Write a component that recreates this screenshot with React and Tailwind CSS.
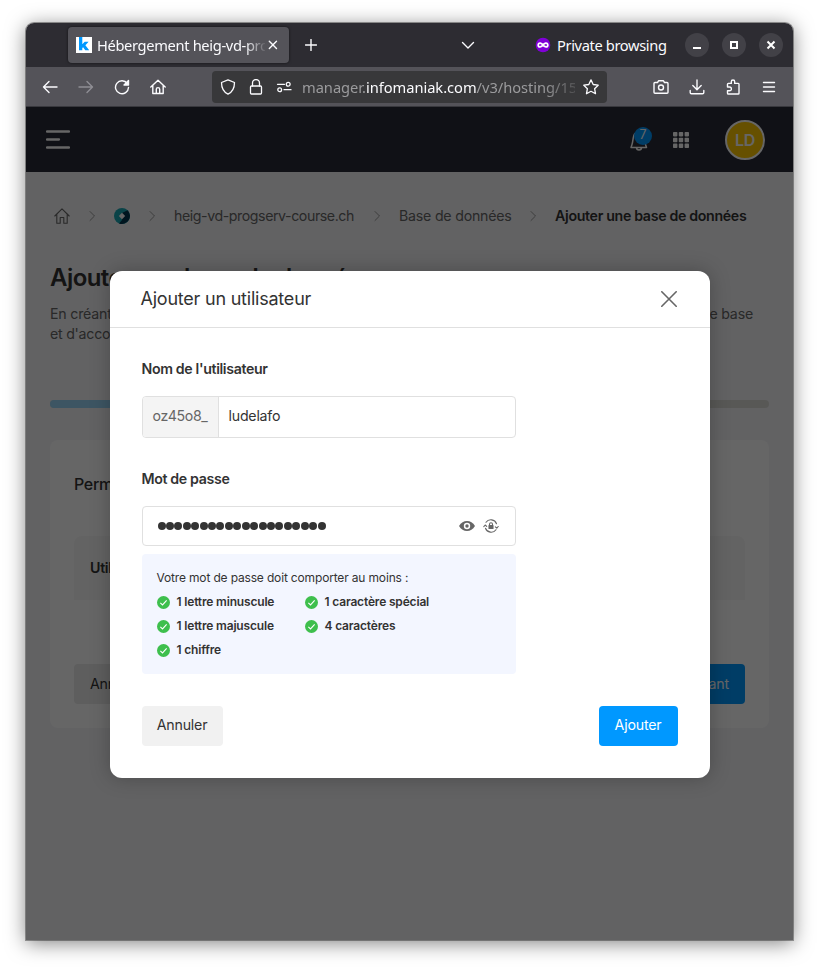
import React from "react";

function Ico({ s = 16, children, className = "", sw = 1.4, vb = "0 0 16 16" }) {
  return (
    <svg width={s} height={s} viewBox={vb} fill="none" stroke="currentColor" strokeWidth={sw} strokeLinecap="round" strokeLinejoin="round" className={"shrink-0 " + className}>
      {children}
    </svg>
  );
}

function TabBar() {
  return (
    <div className="flex h-11 items-center bg-[#2d2c32] pl-[42px] pr-[10px] text-[#fbfbfe]">
      <div className="flex h-9 w-[221px] items-center rounded bg-[#545359] pl-2 shadow-[0_0_3px_rgba(0,0,0,0.6)]">
        <div className="h-4 w-4 shrink-0 bg-white">
          <svg width="16" height="16" viewBox="0 0 16 16">
            <path d="M3 0h3.300v7.200L8.700 4.800h3.900L9.400 8.300l3.800 5H9.300L7.100 10.200l-.8.8v2.300H3z" fill="#0098ff" />
          </svg>
        </div>
        <div className="ml-[5px] w-[168px] overflow-hidden whitespace-nowrap text-[14.67px] leading-5 tracking-[-0.34px] [mask-image:linear-gradient(to_right,black_148px,transparent_170px)]">
          Hébergement heig-vd-progserv
        </div>
        <Ico s={10} vb="0 0 10 10" className="ml-[3px]"><path d="M1.300 1.300l7.200 7.200M8.500 1.300L1.300 8.500" /></Ico>
      </div>
      <Ico s={12} vb="0 0 12 12" className="ml-4"><path d="M6 .5v11M.5 6h11" /></Ico>
      <Ico s={14} vb="0 0 14 14" className="ml-[144px]"><path d="M1.500 4.500L7 10l5.500-5.500" /></Ico>
      <svg width="16" height="16" viewBox="0 0 16 16" className="ml-[60px] shrink-0">
        <circle cx="8" cy="8" r="7.300" fill="#8000d7" />
        <path d="M8 8C6.800 6.200 3.400 5 3.200 8s3.600 1.800 4.800 0c1.200-1.800 4.600-3 4.800 0S9.200 9.800 8 8z" fill="none" stroke="#fff" strokeWidth="1.800" />
      </svg>
      <div className="ml-[6px] w-[110px] whitespace-nowrap text-[14.67px] leading-5 tracking-[-0.37px]">Private browsing</div>
      <div className="ml-[18px] flex gap-[13px]">
        {["M4 11h8", "M5 5h6v6H5z", "M4.500 4.500l7 7M11.500 4.500l-7 7"].map((d) => (
          <div key={d} className="flex h-6 w-6 items-center justify-center rounded-full bg-[#424147]">
            <svg width="16" height="16" viewBox="0 0 16 16" fill="none" stroke="#fff" strokeWidth="2">
              <path d={d} />
            </svg>
          </div>
        ))}
      </div>
    </div>
  );
}

function Toolbar() {
  return (
    <div className="flex h-10 items-center border-b border-[#38383d] bg-[#545359] pl-4 pr-4 text-[#fbfbfe]">
      <Ico><path d="M15 8H1.500M7 2.500L1.500 8 7 13.500" /></Ico>
      <Ico className="ml-5 text-[#8f8e94]"><path d="M1 8h13.500M9 2.500L14.500 8 9 13.500" /></Ico>
      <Ico className="ml-5"><path d="M13.300 4.500A6.500 6.500 0 1 0 14.500 8.500" /><path d="M14.500 1.500V6H10z" fill="currentColor" /></Ico>
      <Ico className="ml-5"><path d="M.8 8L8 1.200 15.200 8M2.800 6.500v8h10.400v-8M6.300 14.500v-4.200a1.700 1.700 0 0 1 3.400 0v4.200" /></Ico>
      <div className="ml-[46px] flex h-8 w-[395px] items-center rounded bg-[#38383a] pl-2">
        <Ico sw={1.300}><path d="M8 .8l6.500 2.700c0 5.500-2 9.500-6.500 11.700C3.500 13 1.500 9 1.500 3.500z" /></Ico>
        <Ico className="ml-3" sw={1.300}><rect x="2.500" y="7" width="11" height="8" rx="1" /><path d="M4.500 7V4a3.500 3.500 0 0 1 7 0v3" /></Ico>
        <Ico className="ml-3" sw={1.300}><path d="M1.500 5.300h7M8 10.700h7" /><circle cx="12.200" cy="5.300" r="1.900" /><circle cx="3.700" cy="10.700" r="1.900" /></Ico>
        <div className="ml-[10px] w-[273px] overflow-hidden whitespace-nowrap text-[14.67px] leading-5 tracking-[-0.03px] text-[#9b9b9d] [mask-image:linear-gradient(to_right,black_240px,transparent_285px)]">
          manager.<span className="text-[#fbfbfe]">infomaniak.com</span>/v3/hosting/15
        </div>
        <Ico className="ml-[8px]" sw={1.300}><path d="M8 .9l2.200 4.600 5 .7-3.600 3.500.9 5L8 12.300l-4.500 2.400.9-5L.8 6.200l5-.7z" /></Ico>
      </div>
      <div className="ml-[46px] flex gap-5">
        <Ico><path d="M1 4.500a1 1 0 0 1 1-1h2.500l1.200-1.800h4.600l1.200 1.800H14a1 1 0 0 1 1 1v8.700a1 1 0 0 1-1 1H2a1 1 0 0 1-1-1z" /><circle cx="8" cy="8.500" r="2.500" /></Ico>
        <Ico><path d="M8 1v9.500M3.800 6.500L8 10.700l4.200-4.200M1.200 11.500v2a1.300 1.300 0 0 0 1.300 1.300h11a1.300 1.300 0 0 0 1.300-1.300v-2" /></Ico>
        <Ico><path d="M2.500 8V5.200a.8.8 0 0 1 .8-.8h3V2.700a1.700 1.700 0 0 1 3.400 0v1.700h3.500a.8.8 0 0 1 .8.8v9a.8.8 0 0 1-.8.8H3.300a.8.8 0 0 1-.8-.8v-2.400h2a1.700 1.700 0 0 0 0-3.800z" /></Ico>
        <Ico><path d="M2.500 3.500h11M2.500 8h11M2.500 12.500h11" /></Ico>
      </div>
    </div>
  );
}

function Chevron() {
  return <Ico s={12} vb="0 0 12 12" sw={1} className="mx-4 text-[#999]"><path d="M4 1.500L8.500 6 4 10.500" /></Ico>;
}

function Page() {
  return (
    <div className="h-[833px] bg-[#f5f5f8] text-[#333]">
      <div className="flex h-[65px] items-center justify-between bg-[#2a2c38] pl-5 pr-7 text-white">
        <svg width="24" height="20" viewBox="0 0 24 20" stroke="#fff" strokeWidth="2.300" strokeLinecap="round">
          <path d="M1 1.500h22M1 9.500h12M1 17.500h22" />
        </svg>
        <div className="flex items-center">
          <div className="relative h-6 w-6">
            <Ico s={24} vb="0 0 24 24" sw={1.500} className="text-white"><path d="M7 5.500C4.800 7 5.300 13 4 16.500L3 19.500h15.500l-1-3M8.500 19.500a2.500 2.500 0 0 0 5 0" /></Ico>
            <span className="absolute -top-[1px] left-[6px] flex h-[18px] w-[18px] items-center justify-center rounded-full bg-[#0098ff] text-[12.500px] text-white">7</span>
          </div>
          <svg width="16" height="16" viewBox="0 0 16 16" fill="#fff" className="ml-[21px]">
            {[0, 5.8, 11.6].map((x) => [0, 5.8, 11.6].map((y) => <rect key={x + "-" + y} x={x} y={y} width="4.400" height="4.400" rx=".8" />))}
          </svg>
          <div className="ml-9 flex h-10 w-10 items-center justify-center rounded-full border-2 border-white bg-[#ffc800] text-[16px] font-semibold tracking-[-0.3px] text-white">LD</div>
        </div>
      </div>
      <div className="flex h-[88px] items-center whitespace-nowrap pl-7 text-[14.200px] leading-5 text-[#666]">
        <Ico className="text-[#666]" sw={1.100}><path d="M.8 8L8 .8 15.200 8M2.800 6.500v8.700h3.400V9.500h3.600v5.700h3.400V6.500" /></Ico>
        <Chevron />
        <svg width="16" height="16" viewBox="0 0 16 16">
          <circle cx="8" cy="8" r="8" fill="#1ba8b4" />
          <path d="M13.500 2.200a8 8 0 0 1-8.500 13.200L8 12V5z" fill="#04364f" />
          <path d="M8 4.800L11.200 8 8 11.200 4.800 8z" fill="#fff" />
        </svg>
        <Chevron />
        <span className="w-[181px] tracking-[-0.43px]">heig-vd-progserv-course.ch</span>
        <Chevron />
        <span className="w-[112px] tracking-[-0.22px]">Base de données</span>
        <Chevron />
        <span className="font-semibold tracking-[-0.33px] text-[#333]">Ajouter une base de données</span>
      </div>
      <div className="px-6">
        <h1 className="text-[24px] font-semibold leading-9 tracking-[-0.55px]">Ajouter une base de données</h1>
        <p className="mt-2 flex justify-between text-[14.200px] leading-5 tracking-[-0.2px] text-[#666]">
          <span>En créant une base de données,</span><span className="pr-4">de base</span>
        </p>
        <p className="text-[14.200px] leading-5 tracking-[-0.25px] text-[#666]">et d'accorder</p>
        <div className="mt-14 h-2 overflow-hidden rounded-full bg-[#dcdcd8]"><div className="h-2 w-1/2 bg-[#98d5f8]" /></div>
        <div className="mt-8 flex h-72 flex-col rounded-lg bg-white px-6 pt-8">
          <h2 className="text-[16px] font-medium leading-6 tracking-[-0.3px]">Permissions</h2>
          <div className="mt-10 flex h-16 items-center rounded-t-lg bg-[#f8f8f8] px-4 text-[14.200px] font-semibold tracking-[-0.3px]">Utilisateur</div>
          <div className="mt-16 flex h-10 justify-between text-[14.200px] tracking-[-0.2px]">
            <div className="flex items-center rounded bg-[#ebebeb] px-4">Annuler</div>
            <div className="flex items-center rounded bg-[#0098ff] px-4 text-white">Suivant</div>
          </div>
        </div>
      </div>
    </div>
  );
}

function Rule({ children }) {
  return (
    <div className="flex h-6 items-center gap-[7px]">
      <svg width="13" height="13" viewBox="0 0 12 12" className="shrink-0"><circle cx="6" cy="6" r="6" fill="#3ebf4d" /><path d="M3.100 6.300l2 1.900 3.800-4.200" stroke="#fff" strokeWidth="1" fill="none" /></svg>
      <span className="whitespace-nowrap">{children}</span>
    </div>
  );
}

function Modal() {
  return (
    <div className="h-[507px] w-[600px] rounded-xl bg-white text-[#333] shadow-[0_0_20px_rgba(0,0,0,0.25)]">
      <div className="flex h-[57px] items-center justify-between border-b border-[#e0e0e0] pl-[31px] pr-[33px]">
        <h2 className="text-[18px] leading-6 tracking-[-0.22px]">Ajouter un utilisateur</h2>
        <Ico sw={1.600} className="text-[#666]"><path d="M.8.8l14.400 14.400M15.200.8L.8 15.200" /></Ico>
      </div>
      <div className="px-8 pt-[31px] text-[14.200px]">
        <div className="font-semibold leading-5 tracking-[-0.36px]">Nom de l'utilisateur</div>
        <div className="mt-[17px] flex h-[42px] w-[374px] overflow-hidden rounded border border-[#e0e0e0]">
          <div className="flex w-[76px] items-center border-r border-[#e0e0e0] bg-[#f4f4f4] pb-[2px] pl-[10px] tracking-[-0.4px] text-[#666]">oz45o8_</div>
          <div className="flex items-center pb-[2px] pl-[10px] tracking-[-0.22px]">ludelafo</div>
        </div>
        <div className="mt-[31px] font-semibold leading-5 tracking-[-0.36px]">Mot de passe</div>
        <div className="mt-[17px] flex h-10 w-[374px] items-center justify-between rounded border border-[#e0e0e0] pl-[15px] pr-4">
          <div className="flex gap-[0.430px]">{Array.from({ length: 20 }, (_, i) => <span key={i} className="h-2 w-2 rounded-full bg-[#333]" />)}</div>
          <div className="flex gap-2 text-[#666]">
            <svg width="16" height="16" viewBox="0 0 16 16"><path d="M0 8c2-3.300 4.800-5 8-5s6 1.700 8 5c-2 3.300-4.800 5-8 5s-6-1.700-8-5z" fill="currentColor" /><circle cx="8" cy="8" r="3.200" fill="#fff" /><circle cx="8" cy="8" r="1.700" fill="currentColor" /></svg>
            <Ico sw={1.100}><path d="M3 4.300a6 6 0 0 1 10.500 1.500M13 11.700a6 6 0 0 1-10.500-1.500" /><path d="M6 7.600h4v2.900H6z" fill="currentColor" /><path d="M6.500 7V6.200a1.500 1.500 0 0 1 3 0V7M.8 8.600l1.400-1.600 1.500 1.300M12.300 8.800l1.500 1.300 1.400-1.600" /></Ico>
          </div>
        </div>
        <div className="mt-2 h-[120px] w-[374px] rounded bg-[#f3f6ff] px-[15px] pt-3 text-[12px]">
          <div className="h-6 leading-6 tracking-[-0.16px]">Votre mot de passe doit comporter au moins :</div>
          <div className="grid grid-cols-[148px_1fr] font-semibold tracking-[-0.17px]">
            <Rule>1 lettre minuscule</Rule><Rule>1 caractère spécial</Rule>
            <Rule>1 lettre majuscule</Rule><Rule>4 caractères</Rule>
            <Rule>1 chiffre</Rule>
          </div>
        </div>
        <div className="mt-8 flex justify-between tracking-[-0.2px]">
          <button className="h-10 w-[81px] rounded bg-[#f1f1f1] pb-[2px]">Annuler</button>
          <button className="h-10 w-[79px] rounded bg-[#0098ff] pb-[2px] text-white">Ajouter</button>
        </div>
      </div>
    </div>
  );
}

export default function App() {
  return (
    <div className="h-[969px] w-[819px] overflow-hidden bg-white pl-[26px] pt-[23px]">
      <div className="w-[767px] rounded-t-lg shadow-[0_0_0_1px_rgba(0,0,0,0.35),0_3px_20px_rgba(0,0,0,0.5)]">
        <div className="overflow-hidden rounded-t-lg font-['Noto_Sans',sans-serif]"><TabBar /><Toolbar /></div>
        <div className="relative font-[Inter,sans-serif]">
          <Page />
          <div className="absolute inset-0 flex justify-center bg-black/60 pt-[164px]"><Modal /></div>
        </div>
      </div>
    </div>
  );
}
